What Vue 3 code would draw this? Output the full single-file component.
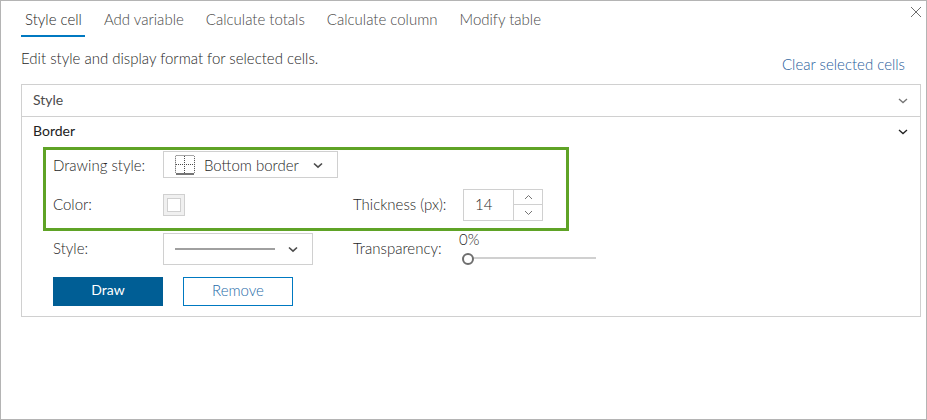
<script setup>
import { ref } from 'vue'

const tabs = ['Style cell', 'Add variable', 'Calculate totals', 'Calculate column', 'Modify table']
const activeTab = ref('Style cell')
const drawing = ref('Bottom border')
const color = ref('#ffffff')
const thickness = ref(14)
const lineStyle = ref('solid')
const transparency = ref(0)
</script>

<template>
  <main class="dialog">
    <header class="top">
      <nav class="tabs" role="tablist">
        <button
          v-for="tab in tabs"
          :key="tab"
          type="button"
          role="tab"
          class="tab"
          :class="{ active: tab === activeTab }"
          :aria-selected="tab === activeTab"
          @click="activeTab = tab"
        >{{ tab }}</button>
      </nav>
      <button type="button" class="close" aria-label="Close">
        <svg width="12" height="12" viewBox="0 0 12 12"><path d="M1 1L11 11M11 1L1 11" /></svg>
      </button>
    </header>

    <div class="intro">
      <p>Edit style and display format for selected cells.</p>
      <a href="#">Clear selected cells</a>
    </div>

    <div class="accordion">
      <button type="button" class="section-head muted" aria-expanded="false">
        <span>Style</span>
        <svg width="10" height="6" viewBox="0 0 10 6"><path d="M1 1L5 4.6L9 1" /></svg>
      </button>
      <button type="button" class="section-head second" aria-expanded="true">
        <span>Border</span>
        <svg width="10" height="6" viewBox="0 0 10 6"><path d="M1 1L5 4.6L9 1" /></svg>
      </button>

      <form class="border-form" @submit.prevent>
        <div class="highlight">
          <div class="row short">
            <label for="drawing">Drawing style:</label>
            <div class="picker wide">
              <svg class="lead" width="20" height="20" viewBox="0 0 20 20">
                <rect x="0.5" y="0.5" width="19" height="18" rx="1" class="dots" />
                <path d="M9.5 1V18M1 9.5H19" class="dots" />
                <path d="M1 19H19" class="base" />
              </svg>
              <select id="drawing" v-model="drawing">
                <option>Bottom border</option>
                <option>Top border</option>
                <option>All borders</option>
              </select>
              <svg class="caret" width="10" height="7" viewBox="0 0 10 7"><path d="M1 1.5L5 5.2L9 1.5" /></svg>
            </div>
          </div>
          <div class="row">
            <label for="color">Color:</label>
            <div><input id="color" v-model="color" type="color" class="swatch"></div>
            <label for="thickness">Thickness (px):</label>
            <div class="spinner">
              <input id="thickness" v-model.number="thickness" type="text" inputmode="numeric">
              <div class="steps">
                <button type="button" aria-label="Increase" @click="thickness++">
                  <svg width="9" height="6" viewBox="0 0 9 6"><path d="M1 5L4.5 1.5L8 5" /></svg>
                </button>
                <button type="button" aria-label="Decrease" @click="thickness--">
                  <svg width="9" height="6" viewBox="0 0 9 6"><path d="M1 1L4.5 4.5L8 1" /></svg>
                </button>
              </div>
            </div>
          </div>
        </div>

        <div class="row line-row">
          <label for="line">Style:</label>
          <div class="picker">
            <svg class="stroke" width="100" height="2" viewBox="0 0 100 2"><path d="M0 1H100" /></svg>
            <select id="line" v-model="lineStyle">
              <option value="solid"></option>
            </select>
            <svg class="caret" width="10" height="7" viewBox="0 0 10 7"><path d="M1 1.5L5 5.2L9 1.5" /></svg>
          </div>
          <label for="transparency">Transparency:</label>
          <div class="slider">
            <output for="transparency">{{ transparency }}%</output>
            <input id="transparency" v-model="transparency" type="range" min="0" max="100">
          </div>
        </div>

        <div class="actions">
          <button type="button" class="primary">Draw</button>
          <button type="button" class="secondary">Remove</button>
        </div>
      </form>
    </div>
  </main>
</template>

<style>
body {
  margin: 0;
  background: #fff;
}
</style>

<style scoped>
.dialog,
.dialog * {
  box-sizing: border-box;
}
.dialog {
  min-height: 100vh;
  padding: 0 4px 0 20px;
  border: 1px solid #b4b4b4;
  background: #fff;
  color: #262626;
  font: 300 15px/20px Lato, "Open Sans", sans-serif;
}
button,
input,
select {
  margin: 0;
  padding: 0;
  border: 0;
  border-radius: 0;
  background: none;
  color: inherit;
  font: inherit;
}
button {
  cursor: pointer;
}
svg {
  display: block;
  fill: none;
  stroke: #4c4c4c;
}
.top {
  display: flex;
  justify-content: space-between;
  align-items: flex-start;
}
.tabs {
  display: flex;
  gap: 15px;
}
.tab {
  height: 36px;
  padding: 2px 3px 0 4px;
  border-bottom: 2px solid transparent;
  color: #484848;
}
.tab.active {
  border-color: #0079c1;
  color: #262626;
}
.close {
  padding: 5px 0;
}
.close svg {
  stroke: #6e6e6e;
}
.intro {
  display: flex;
  justify-content: space-between;
  padding: 11px 17px 10px 0;
}
.intro p {
  margin: 0;
}
.intro a {
  margin-top: 6px;
  color: #1f5c9a;
  text-decoration: none;
}
.accordion {
  margin-right: 1px;
  border: 1px solid #d0d0d0;
}
.section-head {
  display: flex;
  width: 100%;
  height: 31px;
  padding: 0 12px 0 11px;
  justify-content: space-between;
  align-items: center;
  color: #222;
  font-size: 14px;
  font-weight: 400;
}
.section-head span {
  padding-bottom: 2px;
}
.section-head svg {
  stroke: #222;
  stroke-width: 1.3;
}
.section-head.muted {
  color: #4c4c4c;
}
.section-head.muted svg {
  stroke: #757575;
}
.section-head.second {
  border-top: 1px solid #d0d0d0;
}
.border-form {
  padding: 0 21px 10px;
}
.highlight {
  display: grid;
  gap: 10px;
  max-width: 526px;
  padding: 1px 7px 7px;
  border: 3px solid #5fa326;
}
.row {
  display: grid;
  grid-template-columns: 110px 190px 110px 1fr;
  align-items: center;
  min-height: 32px;
}
.row label {
  padding-bottom: 2px;
}
.row.short {
  min-height: 28px;
}
.row.short label {
  padding-bottom: 0;
}
.line-row {
  margin: 2px 10px 12px;
}
.picker {
  position: relative;
  width: 150px;
  height: 32px;
}
.picker select {
  display: block;
  width: 100%;
  height: 100%;
  border: 1px solid #d0d0d0;
  appearance: none;
}
.picker.wide {
  align-self: start;
  width: 175px;
  height: 27px;
}
.picker.wide select {
  padding-left: 40px;
}
.picker svg {
  position: absolute;
  pointer-events: none;
}
.picker .lead {
  top: 4px;
  left: 12px;
}
.dots {
  stroke: #4c4c4c;
  stroke-dasharray: 1 1;
}
.base {
  stroke: #757575;
  stroke-width: 2;
}
.picker .stroke {
  top: 15px;
  left: 12px;
  stroke: #a0a0a0;
  stroke-width: 2;
}
.picker .caret {
  top: 50%;
  right: 15px;
  margin-top: -3px;
  stroke-width: 1.6;
}
.swatch {
  display: block;
  width: 22px;
  height: 22px;
  padding: 3px;
  border: 1px solid #d0d0d0;
  background: #f0f0f0;
  appearance: none;
}
.swatch::-webkit-color-swatch-wrapper {
  padding: 0;
}
.swatch::-webkit-color-swatch {
  border: 1px solid #d0d0d0;
  border-radius: 0;
}
.spinner {
  display: flex;
  width: 80px;
  height: 32px;
  border: 1px solid #d0d0d0;
}
.spinner input {
  width: 49px;
  padding: 0 0 2px 11px;
}
.steps {
  display: grid;
  flex: 1;
  grid-template-rows: 14px 1fr;
  border-left: 1px solid #d0d0d0;
}
.steps button {
  display: grid;
  place-items: center;
}
.steps button + button {
  border-top: 1px solid #d0d0d0;
}
.steps svg {
  stroke: #757575;
}
.slider {
  display: grid;
  width: 134px;
  height: 36px;
  margin: -4px 0 0 -1px;
  grid-template-rows: 18px 18px;
}
.slider output {
  margin-left: -3px;
}
.slider input {
  width: 100%;
  height: 16px;
  margin-top: 3px;
  appearance: none;
}
.slider input::-webkit-slider-runnable-track {
  height: 2px;
  background: #d0d0d0;
}
.slider input::-webkit-slider-thumb {
  width: 12px;
  height: 12px;
  margin-top: -4px;
  border: 2px solid #6e6e6e;
  border-radius: 50%;
  background: #fff;
  appearance: none;
}
.actions {
  display: flex;
  gap: 20px;
  padding: 0 10px;
}
.actions button {
  width: 110px;
  height: 29px;
  padding-bottom: 3px;
  border: 1px solid #0079c1;
}
.actions .primary {
  border-color: #005e95;
  background: #005e95;
  color: #fff;
  font-size: 14px;
  font-weight: 400;
}
.actions .secondary {
  color: #1f6ba8;
}
</style>
